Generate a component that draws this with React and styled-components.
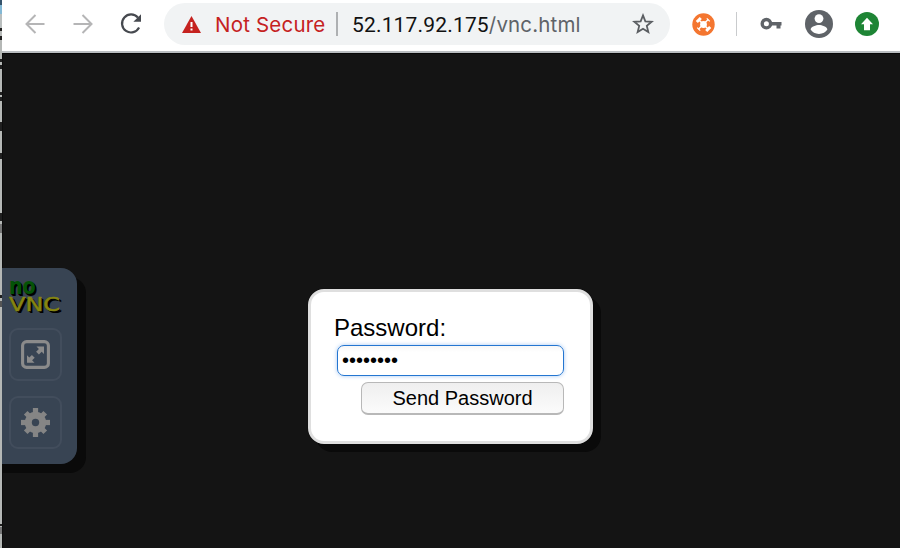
import React from 'react';
import styled, { createGlobalStyle } from 'styled-components';

const GlobalStyle = createGlobalStyle`
  * { box-sizing: border-box; }
  body { margin: 0; background: #141414; overflow: hidden; }
`;

const Screen = styled.div`
  display: grid;
  grid-template-columns: 2px 1fr;
  width: 900px;
  height: 548px;
  overflow: hidden;
`;

const EdgeStrip = styled.div`
  background: linear-gradient(#35536b 0 5px, #83b8d5 5px 14px, #b9bebe 14px 28px, #222 28px 31px, #b7bab8 31px 36px, #222 36px 40px, #b5b8b6 40px);
  overflow: hidden;
`;

const EdgeMark = styled.div`
  height: ${(p) => p.$size}px;
  margin-top: ${(p) => p.$gap}px;
  background: ${(p) => p.$color || '#202020'};
`;

const Browser = styled.div`
  display: flex;
  flex-direction: column;
  min-width: 0;
`;

const Toolbar = styled.header`
  display: flex;
  align-items: center;
  height: 53px;
  padding: 0 0 5px 20px;
  background: #fff;
  border-bottom: 2px solid #b9bdc0;
  flex: none;
`;

const NavButton = styled.button`
  display: flex;
  align-items: center;
  justify-content: center;
  width: 26px;
  height: 26px;
  margin: 2px ${(p) => p.$gap}px 0 0;
  padding: 0;
  border: 0;
  background: none;
  flex: none;
`;

const AddressBar = styled.div`
  display: flex;
  align-items: center;
  width: 506px;
  height: 42px;
  margin-top: 2px;
  padding: 0 16px 0 18px;
  border-radius: 21px;
  background: #f1f3f4;
  font: 20.5px/24px Inter, "Liberation Sans", sans-serif;
  white-space: nowrap;
  flex: none;
`;

const Warning = styled.span`
  width: 121px;
  margin: 2px 0 0 14px;
  color: #c5221f;
  letter-spacing: 0.2px;
`;

const Divider = styled.span`
  width: ${(p) => p.$thickness || 1}px;
  height: 24px;
  background: ${(p) => p.$color};
  flex: none;
`;

const Url = styled.span`
  margin: 2px 0 0 14px;
  flex: 1;
  color: #5f6368;
  letter-spacing: 0.15px;
`;

const Host = styled.span`
  color: #111;
  font-family: Roboto, sans-serif;
  font-size: 21px;
  letter-spacing: 0.17px;
`;

const Actions = styled.div`
  display: flex;
  align-items: center;
  margin: 2px 0 0 22px;
`;

const Slot = styled.span`
  display: flex;
  margin-left: ${(p) => p.$gap}px;
`;

const Viewport = styled.main`
  display: grid;
  grid-template-columns: 305px 1fr;
  align-items: start;
  flex: 1;
  background: #141414;
  border-left: 1px solid #0c0c0c;
  border-top: 1px solid #080808;
`;

const ControlBar = styled.aside`
  display: flex;
  flex-direction: column;
  align-items: center;
  width: 75px;
  height: 196px;
  margin-top: 214px;
  margin-left: -1px;
  padding: 14px 8px 0 0;
  border-radius: 0 16px 16px 0;
  background: #384453;
  box-shadow: 9px 9px 0 #0a0a0a, 0 9px 0 #0a0a0a;
`;

const Logo = styled.div`
  width: 53px;
  height: 32px;
  margin-bottom: 14px;
  font-family: "DejaVu Sans", sans-serif;
  flex: none;
`;

const LogoTop = styled.div`
  width: max-content;
  height: 13px;
  color: #045307;
  font-size: 23px;
  font-weight: 700;
  line-height: 9px;
  text-shadow: 1px 1px #000, 2px 2px #000;
  transform: scaleX(0.83);
  transform-origin: left;
`;

const LogoBottom = styled.div`
  width: max-content;
  color: #858512;
  font-size: 20px;
  line-height: 18px;
  text-shadow: 1px 1px #000, 2px 2px #000;
  transform: scaleX(1.2);
  transform-origin: left;
  -webkit-text-stroke: 0.5px #858512;
`;

const ControlButton = styled.button`
  display: flex;
  align-items: center;
  justify-content: center;
  width: 53px;
  height: 53px;
  margin-bottom: 15px;
  padding: 0;
  border: 2px solid #424d5c;
  border-radius: 9px;
  background: none;
  flex: none;
`;

const Dialog = styled.form`
  display: flex;
  flex-direction: column;
  width: 285px;
  height: 155px;
  margin-top: 235px;
  padding: 21px 26px 0 23px;
  border: 3px solid #dfdfdf;
  border-radius: 16px;
  background: #fff;
  box-shadow: 0 0 1px #000, 8px 8px 0 #0a0a0a;
  font-family: "Liberation Sans", Arial, sans-serif;
  color: #000;
`;

const Label = styled.label`
  font-size: 24px;
  line-height: 30px;
`;

const PasswordInput = styled.input`
  width: 227px;
  height: 31px;
  margin: 2px 0 0 3px;
  padding: 0 4px;
  border: 1px solid #2476d1;
  border-radius: 7px;
  outline: 0;
  background: linear-gradient(#f7f7f7, #fff 6px);
  box-shadow: 0 0 4px #a6c8f2;
  font: 20px "Liberation Sans", Arial, sans-serif;
  color: #000;
  flex: none;
`;

const SubmitButton = styled.button`
  align-self: flex-end;
  width: 203px;
  height: 33px;
  margin: 6px 0 0;
  padding: 0;
  border: 1px solid #b8b8b8;
  border-bottom-width: 2px;
  border-radius: 7px;
  background: linear-gradient(#efefef, #fbfbfb);
  font: 20px/28px "Liberation Sans", Arial, sans-serif;
  color: #000;
  flex: none;
`;

const edgeMarks = [
  { gap: 59, size: 3 }, { gap: 3, size: 4 }, { gap: 23, size: 3 }, { gap: 2, size: 4 },
  { gap: 21, size: 9 }, { gap: 22, size: 6 }, { gap: 54, size: 8 },
  { gap: 3, size: 9, color: '#777' }, { gap: 62, size: 3 }, { gap: 3, size: 6, color: '#555' },
  { gap: 217, size: 2 }, { gap: 1, size: 7, color: '#777' },
];

const Arrow = ({ flip }) => (
  <svg width="22" height="22" viewBox="0 0 22 22" fill="none" stroke="#b5b5b6" strokeWidth="2">
    {flip ? <path d="M1.5 11h17M10.5 2l9 9-9 9" /> : <path d="M20.5 11h-17M11.5 2l-9 9 9 9" />}
  </svg>
);

const Reload = () => (
  <svg width="24" height="24" viewBox="0 0 24 24" fill="none">
    <path d="M18.9 5.6A9 9 0 1 0 20.1 15.5" stroke="#46494f" strokeWidth="2.2" />
    <path d="M22 2.2v7.6h-7.6z" fill="#46494f" />
  </svg>
);

const Alert = () => (
  <svg width="19" height="17" viewBox="0 0 19 17">
    <path d="M9.5 0 19 17H0z" fill="#c5221f" />
    <path d="M8.5 6h2v5h-2zM8.5 12.5h2v2h-2z" fill="#fff" />
  </svg>
);

const Star = () => (
  <svg width="22" height="22" viewBox="0 0 22 22" fill="none">
    <path d="m11 2.4 2.35 5.9 6.35.45-4.9 4.1 1.55 6.2L11 15.7l-5.35 3.35 1.55-6.2-4.9-4.1 6.35-.45z" stroke="#5b5e62" strokeWidth="1.8" />
  </svg>
);

const Extension = () => (
  <svg width="23" height="23" viewBox="0 0 23 23">
    <circle cx="11.5" cy="11.5" r="11.2" fill="#f47630" />
    <g stroke="#fff" fill="none">
      <path d="m7.2 7.2 8.6 8.6m.4-9.4-9.8 9.8" strokeWidth="1.4" />
      <path d="M4.8 9 8.8 5M14.2 18l4-4" strokeWidth="3" />
      <path d="M14.8 5.3l3 3M5.2 14.7l3 3" strokeWidth="1.2" />
    </g>
    <circle cx="11.5" cy="11.5" r="3.4" fill="#fff" />
  </svg>
);

const KeyIcon = () => (
  <svg width="22" height="14" viewBox="0 0 22 14">
    <circle cx="6.4" cy="6.7" r="4.2" fill="none" stroke="#5f6368" strokeWidth="3.4" />
    <path d="M10.5 5h11v3.6h-1v3h-4v-3h-6z" fill="#5f6368" />
  </svg>
);

const Profile = () => (
  <svg width="28" height="28" viewBox="0 0 28 28">
    <circle cx="14" cy="14" r="14" fill="#5f6368" />
    <circle cx="14" cy="8.6" r="4.4" fill="#fff" />
    <path d="M5.6 19.6c.2-3 5.6-4.6 8.4-4.6s8.2 1.6 8.4 4.6c-1.6 2.7-4.7 4.4-8.4 4.4s-6.8-1.7-8.4-4.4z" fill="#fff" />
  </svg>
);

const Update = () => (
  <svg width="24" height="24" viewBox="0 0 24 24">
    <circle cx="12" cy="12" r="12" fill="#1e8535" />
    <path d="m12 5.7 6 6.6h-3v5.9H9v-5.9H6z" fill="#fff" />
  </svg>
);

const Fullscreen = () => (
  <svg width="29" height="29" viewBox="0 0 29 29">
    <rect x="1.6" y="1.6" width="25.8" height="25.8" rx="4" fill="none" stroke="#8b8b8b" strokeWidth="3.1" />
    <path d="M15.5 6.5H23V14l-2.3-2.3-2.8 2.8-2.8-2.8 2.8-2.8zM6 15.2l2.3 2.3 2.6-2.6 2.8 2.8-2.6 2.6 2.4 2.4H6z" fill="#8b8b8b" />
  </svg>
);

const Gear = () => (
  <svg width="29" height="29" viewBox="-14.5 -14.5 29 29">
    <g fill="#858585">
      {[0, 45, 90, 135].map((angle) => (
        <rect key={angle} x="-2.6" y={angle % 90 ? -13.8 : -14.5} width="5.2" height={angle % 90 ? 27.6 : 29} transform={`rotate(${angle})`} />
      ))}
      <circle r="10.7" />
    </g>
    <circle r="3.7" fill="#384453" />
  </svg>
);

export default function App() {
  return (
    <>
      <GlobalStyle />
      <Screen>
        <EdgeStrip>
          {edgeMarks.map((m, i) => <EdgeMark key={i} $gap={m.gap} $size={m.size} $color={m.color} />)}
        </EdgeStrip>
        <Browser>
          <Toolbar>
            <NavButton aria-label="Back" $gap={22}><Arrow /></NavButton>
            <NavButton aria-label="Forward" $gap={22}><Arrow flip /></NavButton>
            <NavButton aria-label="Reload" $gap={20}><Reload /></NavButton>
            <AddressBar>
              <Alert />
              <Warning>Not Secure</Warning>
              <Divider $color="#aeb0b2" $thickness={2} />
              <Url><Host>52.117.92.175</Host>/vnc.html</Url>
              <Star />
            </AddressBar>
            <Actions>
              <Slot $gap={0}><Extension /></Slot>
              <Slot $gap={21}><Divider $color="#c9cbcd" /></Slot>
              <Slot $gap={23}><KeyIcon /></Slot>
              <Slot $gap={23}><Profile /></Slot>
              <Slot $gap={22}><Update /></Slot>
            </Actions>
          </Toolbar>
          <Viewport>
            <ControlBar>
              <Logo><LogoTop>no</LogoTop><LogoBottom>VNC</LogoBottom></Logo>
              <ControlButton aria-label="Fullscreen"><Fullscreen /></ControlButton>
              <ControlButton aria-label="Settings"><Gear /></ControlButton>
            </ControlBar>
            <Dialog onSubmit={(e) => e.preventDefault()}>
              <Label htmlFor="password">Password:</Label>
              <PasswordInput id="password" type="password" defaultValue="password" />
              <SubmitButton>Send Password</SubmitButton>
            </Dialog>
          </Viewport>
        </Browser>
      </Screen>
    </>
  );
}
